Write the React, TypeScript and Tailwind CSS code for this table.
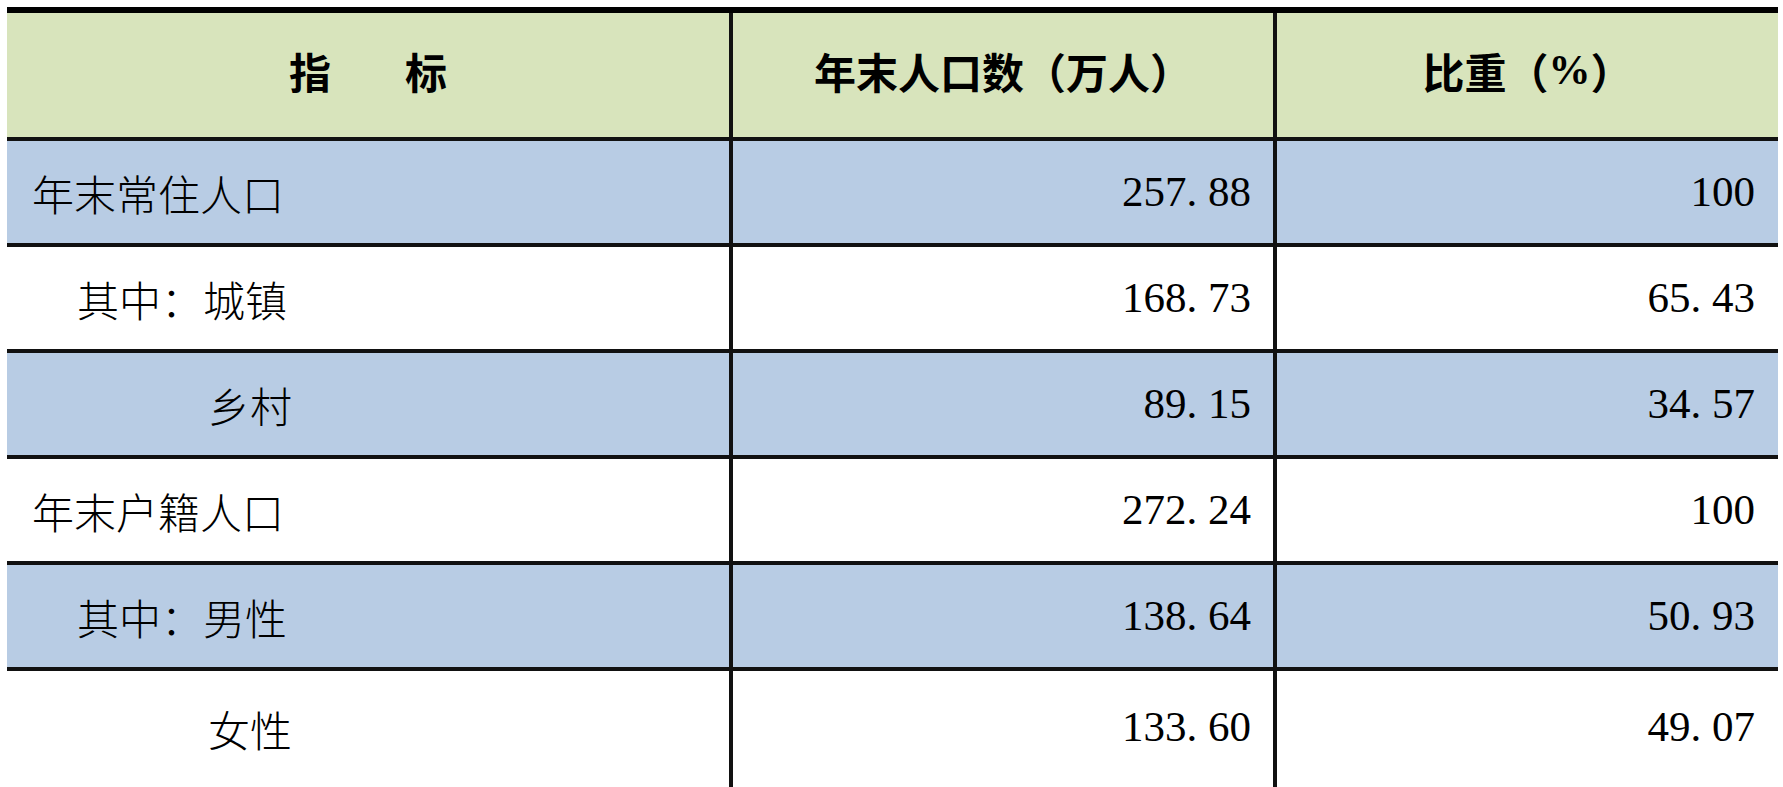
import React from "react";

function Num({ v }: { v: string }) {
  const parts = v.split(".");
  if (parts.length === 1) return <span>{v}</span>;
  return (
    <span>
      {parts[0]}.<span className="inline-block w-[0.25em]"></span>
      {parts[1]}
    </span>
  );
}

type Row = { label: string; pad: string; a: string; b: string; bg: string; last?: boolean };

const rows: Row[] = [
  { label: "年末常住人口", pad: "pl-[25px]", a: "257.88", b: "100", bg: "bg-[#b8cce4]" },
  { label: "其中：城镇", pad: "pl-[70px]", a: "168.73", b: "65.43", bg: "bg-white" },
  { label: "乡村", pad: "pl-[201px]", a: "89.15", b: "34.57", bg: "bg-[#b8cce4]" },
  { label: "年末户籍人口", pad: "pl-[25px]", a: "272.24", b: "100", bg: "bg-white" },
  { label: "其中：男性", pad: "pl-[70px]", a: "138.64", b: "50.93", bg: "bg-[#b8cce4]" },
  { label: "女性", pad: "pl-[201px]", a: "133.60", b: "49.07", bg: "bg-white", last: true },
];

export default function App() {
  return (
    <div className="w-[1783px] h-[787px] overflow-hidden bg-white pt-[7px] pl-[7px] text-black">
      <div className="w-[1771px] border-t-[6px] border-black">
        <div className="flex h-[128px] border-b-4 border-[#111] bg-[#d8e4bc] font-['Noto_Sans_CJK_SC','Noto_Sans',sans-serif] text-[42px] font-bold">
          <div className="w-[726px] border-r-4 border-[#111] flex items-center justify-center pb-[10px]">
            <span>指</span>
            <span className="inline-block w-[74px]"></span>
            <span>标</span>
          </div>
          <div className="w-[544px] border-r-4 border-[#111] flex items-center justify-center pb-[10px]">
            年末人口数（万人）
          </div>
          <div className="flex-1 flex items-center justify-center pb-[10px]">
            比重（<span className="font-['Liberation_Serif',serif]">%</span>）
          </div>
        </div>
        {rows.map((r, i) => (
          <div
            key={i}
            className={`flex ${r.bg} ${r.last ? "h-[130px]" : "h-[106px] border-b-4 border-[#111]"}`}
          >
            <div
              className={`w-[726px] border-r-4 border-[#111] flex ${r.last ? "items-start pt-[26px]" : "items-center"} ${r.pad} text-[42px] font-light font-['Noto_Sans_CJK_SC','Noto_Sans',sans-serif]`}
            >
              {r.label}
            </div>
            <div
              className={`w-[544px] border-r-4 border-[#111] flex ${r.last ? "items-start pt-[24px]" : "items-center"} justify-end pr-[22px] text-[43px] font-['Liberation_Serif','Noto_Sans_CJK_SC',serif]`}
            >
              <Num v={r.a} />
            </div>
            <div
              className={`flex-1 flex ${r.last ? "items-start pt-[24px]" : "items-center"} justify-end pr-[23px] text-[43px] font-['Liberation_Serif','Noto_Sans_CJK_SC',serif]`}
            >
              <Num v={r.b} />
            </div>
          </div>
        ))}
      </div>
    </div>
  );
}
